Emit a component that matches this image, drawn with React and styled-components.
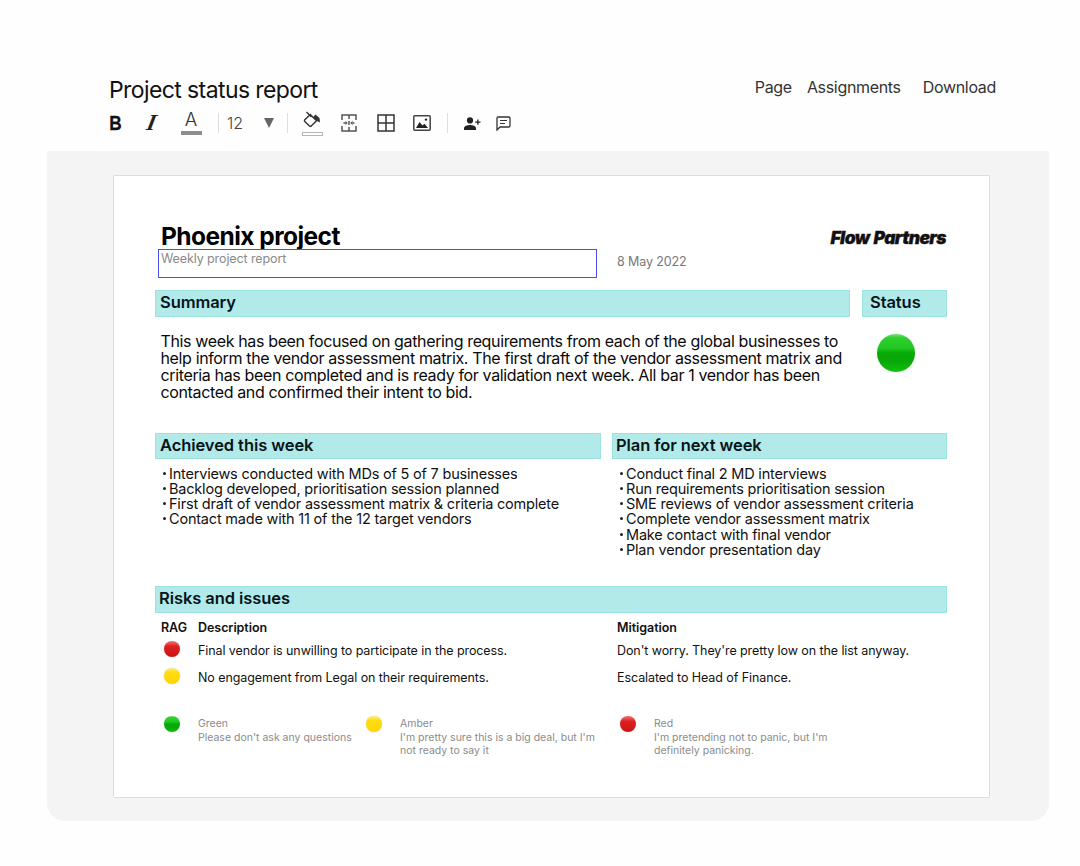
import React from "react";
import styled, { createGlobalStyle } from "styled-components";

const GlobalStyle = createGlobalStyle`
  * { box-sizing: border-box; }
  html, body { margin: 0; padding: 0; background: #fff; }
  body { font-family: Inter, "Liberation Sans", sans-serif; color: #000; }
`;

const Screen = styled.div`
  width: 1080px;
  height: 866px;
  padding-top: 74px;
  overflow: hidden;
  background: #fefefe;
`;

const TopBar = styled.header`
  display: flex;
  justify-content: space-between;
  align-items: flex-start;
  height: 77px;
  padding: 0 84px 0 109px;
`;

const TitleBlock = styled.div`
  display: flex;
  flex-direction: column;
`;

const DocTitle = styled.h1`
  margin: 0;
  font-size: 23px;
  line-height: 32px;
  font-weight: 400;
  letter-spacing: -0.6px;
  color: #111;
`;

const Toolbar = styled.div`
  display: flex;
  align-items: center;
  height: 32px;
  margin-top: 1px;
  color: #333;
`;

const ToolSlot = styled.div`
  width: ${({ $w }) => $w}px;
  height: 32px;
  display: flex;
  flex-direction: column;
  align-items: center;
  justify-content: center;
  flex: none;
`;

const Divider = styled.div`
  width: 1px;
  height: 20px;
  background: #dedede;
  flex: none;
`;

const BoldGlyph = styled.span`
  font-family: "Liberation Sans", sans-serif;
  font-size: 21px;
  line-height: 22px;
  font-weight: 700;
  color: #111;
  transform: scaleX(0.82);
  -webkit-text-stroke: 0.3px #111;
`;

const ItalicGlyph = styled.span`
  font-family: "Liberation Serif", serif;
  font-size: 23px;
  line-height: 22px;
  font-weight: 700;
  font-style: italic;
  color: #222;
  transform: skewX(-12deg);
`;

const FontLetter = styled.span`
  font-size: 18.5px;
  line-height: 16px;
  font-weight: 300;
  color: #333;
`;

const ColorBar = styled.span`
  width: 21px;
  height: 4px;
  margin-top: 4px;
  background: ${({ $empty }) => ($empty ? "#fff" : "#8e8e8e")};
  border: ${({ $empty }) => ($empty ? "1px solid #b5b5b5" : "none")};
`;

const SizeValue = styled.span`
  font-size: 16px;
  font-weight: 300;
  color: #444;
`;

const Caret = styled.span`
  width: 0;
  height: 0;
  border-left: 5px solid transparent;
  border-right: 5px solid transparent;
  border-top: 10px solid #666;
`;

const NavLinks = styled.nav`
  display: flex;
  padding-top: 2px;
  font-size: 16px;
  line-height: 22px;
  letter-spacing: -0.32px;
  color: #333;
`;

const NavLink = styled.a`
  margin-left: ${({ $gap }) => $gap}px;
`;

const Panel = styled.main`
  width: 1002px;
  height: 670px;
  margin-left: 47px;
  padding: 25px 60px 0 67px;
  background: #f4f4f4;
  border-radius: 0 0 18px 18px;
`;

const Sheet = styled.section`
  width: 875px;
  height: 621px;
  padding: 46px 42px 0 41px;
  background: #fff;
  box-shadow: 0 0 1px rgba(0, 0, 0, 0.55);
`;

const SheetHead = styled.div`
  display: flex;
  justify-content: space-between;
  height: 68px;
`;

const HeadLeft = styled.div`
  display: flex;
  flex-direction: column;
  padding-left: 3px;
`;

const ProjectName = styled.h2`
  margin: 0 0 0 3px;
  padding-top: 1px;
  font-size: 24.5px;
  line-height: 26px;
  font-weight: 700;
  letter-spacing: -0.55px;
`;

const SubRow = styled.div`
  display: flex;
  align-items: center;
`;

const SubtitleBox = styled.div`
  width: 439px;
  height: 29px;
  padding: 1px 2px;
  border: 1.5px solid #4a50e8;
  font-size: 12.5px;
  line-height: 15px;
  letter-spacing: -0.1px;
  color: #8a8a8a;
`;

const DateText = styled.span`
  margin: 0 0 5px 20px;
  font-size: 12.5px;
  letter-spacing: -0.12px;
  color: #777;
`;

const Logo = styled.div`
  margin: 6px 1px 0 0;
  font-size: 17.5px;
  line-height: 20px;
  font-weight: 900;
  font-style: italic;
  letter-spacing: -0.6px;
  word-spacing: 1px;
  color: #111;
  -webkit-text-stroke: 0.3px #111;
`;

const Row = styled.div`
  display: flex;
  justify-content: space-between;
`;

const SectionBar = styled.div`
  width: ${({ $w }) => ($w ? `${$w}px` : "100%")};
  height: ${({ $h }) => $h || 27}px;
  padding-left: ${({ $pad }) => $pad || 4}px;
  background: #b2eae9;
  border: 1px solid #9be3e1;
  font-size: 16.5px;
  line-height: ${({ $h }) => ($h || 27) - 4}px;
  font-weight: 600;
  letter-spacing: -0.08px;
  color: #07141a;
  flex: none;
`;

const SummaryBody = styled.div`
  display: flex;
  justify-content: space-between;
  height: 116px;
`;

const SummaryText = styled.p`
  width: 690px;
  margin: 16px 0 0 5.5px;
  font-size: 16px;
  line-height: 17px;
  letter-spacing: -0.36px;
  color: #0a0a0a;
`;

const Dot = styled.span`
  display: block;
  width: ${({ $size }) => $size}px;
  height: ${({ $size }) => $size}px;
  border-radius: 50%;
  flex: none;
  background: ${({ $tone }) =>
    ({
      green: "linear-gradient(#7fe07f 0%, #2ed02e 10%, #22c822 36%, #0aa80a 50%, #08a808 72%, #10c010 100%)",
      amber: "linear-gradient(#ffec80 0%, #ffdc10 28%, #ffd600 100%)",
      red: "linear-gradient(#f47070 0%, #dc2020 34%, #cc1414 100%)",
    })[$tone]};
  box-shadow: 0 0 1px rgba(0, 0, 0, 0.35);
`;

const StatusCell = styled.div`
  width: 85px;
  padding: 17px 0 0 15px;
`;

const Columns = styled.div`
  display: flex;
  justify-content: space-between;
  height: 153px;
`;

const Column = styled.div`
  width: ${({ $w }) => $w}px;
`;

const BulletList = styled.ul`
  margin: 7px 0 0;
  padding: 0 0 0 6px;
  list-style: none;
  font-size: 14.5px;
  line-height: 15.15px;
  letter-spacing: -0.2px;
  color: #111;
`;

const BulletItem = styled.li`
  display: flex;
  &::before {
    content: "";
    width: 3px;
    height: 3px;
    margin: 6px 3px 0 2px;
    border-radius: 50%;
    background: #222;
    flex: none;
  }
`;

const RiskGrid = styled.div`
  display: grid;
  grid-template-columns: 37px 419px 1fr;
  padding: 7px 0 0 6px;
  font-size: 12.5px;
  color: #111;
`;

const RiskHead = styled.div`
  height: 15px;
  line-height: 15px;
  font-weight: 600;
  letter-spacing: -0.05px;
  margin-bottom: 8px;
`;

const RiskCell = styled.div`
  height: 27px;
  line-height: 15px;
  letter-spacing: -0.08px;
`;

const DotCell = styled.div`
  height: 27px;
  padding-left: 3px;
  margin-top: -2px;
`;

const Legend = styled.div`
  display: flex;
  margin-top: 19px;
  padding-left: 9px;
`;

const LegendItem = styled.div`
  width: ${({ $w }) => $w}px;
  display: flex;
  flex: none;
`;

const LegendText = styled.div`
  width: ${({ $w }) => $w}px;
  margin: 1px 0 0 18px;
  font-size: 10.5px;
  line-height: 13.5px;
  color: #8b8b8b;
`;

const BucketIcon = () => (
  <svg width="18" height="17" viewBox="0 0 18 17" fill="none">
    <path d="M1.800 8.800L7.300 3.500l6.200 6.200-5.300 5.300a1.200 1.200 0 0 1-1.700 0L1.800 10.500a1.200 1.200 0 0 1 0-1.700z" stroke="#333" strokeWidth="1.400" />
    <path d="M3.500 1L8.500 6" stroke="#333" strokeWidth="1.400" />
    <path d="M10 6.200L12.500 3.500l4 3.500.5 4.500-3.500-1.800z" fill="#333" />
  </svg>
);

const SplitIcon = () => (
  <svg width="16" height="18" viewBox="0 0 16 18" fill="none" stroke="#555" strokeWidth="1.500">
    <path d="M1 6V1h14v5M1 12v5h14v-5" />
    <path d="M8 1v4M8 7v4M8 13v4" />
    <path d="M2.500 9H6M13.500 9H10" />
    <path d="M4.500 7.400L6.200 9l-1.700 1.600M11.500 7.400L9.800 9l1.700 1.600" strokeWidth="1" />
  </svg>
);

const GridIcon = () => (
  <svg width="18" height="18" viewBox="0 0 18 18" fill="none" stroke="#333" strokeWidth="1.500">
    <rect x="1" y="1" width="16" height="16" />
    <path d="M9 1v16M1 9h16" />
  </svg>
);

const ImageIcon = () => (
  <svg width="18" height="16" viewBox="0 0 18 16">
    <rect x="0.800" y="0.800" width="16.400" height="14.400" rx="1" fill="#fff" stroke="#444" strokeWidth="1.500" />
    <path d="M3 13l3.500-6 3 3.600 2-1.800L15 13z" fill="#222" />
    <circle cx="13" cy="4.600" r="1.200" fill="#222" />
  </svg>
);

const PersonAddIcon = () => (
  <svg width="17" height="13" viewBox="0 0 17 13" fill="#222">
    <circle cx="6" cy="3.400" r="3.100" />
    <path d="M0 13v-1.800C0 9 3.400 7.900 6 7.900s6 1.100 6 3.300V13z" />
    <path d="M13.200 2.500h1.300v2h2v1.300h-2v2h-1.300v-2h-2V4.500h2z" />
  </svg>
);

const CommentIcon = () => (
  <svg width="15" height="15" viewBox="0 0 15 15" fill="none" stroke="#333">
    <path d="M1 2.200a1.200 1.200 0 0 1 1.200-1.200h10.600a1.200 1.200 0 0 1 1.200 1.200v7.600a1.200 1.200 0 0 1-1.200 1.200H4L1 14z" strokeWidth="1.300" />
    <path d="M4 4.500h7M4 7.500h5" strokeWidth="1.200" />
  </svg>
);

const ACHIEVED = [
  "Interviews conducted with MDs of 5 of 7 businesses",
  "Backlog developed, prioritisation session planned",
  "First draft of vendor assessment matrix & criteria complete",
  "Contact made with 11 of the 12 target vendors",
];

const PLANNED = [
  "Conduct final 2 MD interviews",
  "Run requirements prioritisation session",
  "SME reviews of vendor assessment criteria",
  "Complete vendor assessment matrix",
  "Make contact with final vendor",
  "Plan vendor presentation day",
];

export default function App() {
  return (
    <Screen>
      <GlobalStyle />
      <TopBar>
        <TitleBlock>
          <DocTitle>Project status report</DocTitle>
          <Toolbar>
            <ToolSlot $w={14}>
              <BoldGlyph>B</BoldGlyph>
            </ToolSlot>
            <ToolSlot $w={56}>
              <ItalicGlyph>I</ItalicGlyph>
            </ToolSlot>
            <ToolSlot $w={24}>
              <FontLetter>A</FontLetter>
              <ColorBar />
            </ToolSlot>
            <ToolSlot $w={15} />
            <Divider />
            <ToolSlot $w={32}>
              <SizeValue>12</SizeValue>
            </ToolSlot>
            <ToolSlot $w={36}>
              <Caret />
            </ToolSlot>
            <Divider />
            <ToolSlot $w={48}>
              <BucketIcon />
              <ColorBar $empty />
            </ToolSlot>
            <ToolSlot $w={26}>
              <SplitIcon />
            </ToolSlot>
            <ToolSlot $w={48}>
              <GridIcon />
            </ToolSlot>
            <ToolSlot $w={24}>
              <ImageIcon />
            </ToolSlot>
            <ToolSlot $w={13} />
            <Divider />
            <ToolSlot $w={48}>
              <PersonAddIcon />
            </ToolSlot>
            <ToolSlot $w={14}>
              <CommentIcon />
            </ToolSlot>
          </Toolbar>
        </TitleBlock>
        <NavLinks>
          <NavLink>Page</NavLink>
          <NavLink $gap={15}>Assignments</NavLink>
          <NavLink $gap={22}>Download</NavLink>
        </NavLinks>
      </TopBar>

      <Panel>
        <Sheet>
          <SheetHead>
            <HeadLeft>
              <ProjectName>Phoenix project</ProjectName>
              <SubRow>
                <SubtitleBox>Weekly project report</SubtitleBox>
                <DateText>8 May 2022</DateText>
              </SubRow>
            </HeadLeft>
            <Logo>Flow Partners</Logo>
          </SheetHead>

          <Row>
            <SectionBar $w={695}>Summary</SectionBar>
            <SectionBar $w={85} $pad={7}>Status</SectionBar>
          </Row>
          <SummaryBody>
            <SummaryText>
              This week has been focused on gathering requirements from each of the global businesses to
              help inform the vendor assessment matrix. The first draft of the vendor assessment matrix and
              criteria has been completed and is ready for validation next week. All bar 1 vendor has been
              contacted and confirmed their intent to bid.
            </SummaryText>
            <StatusCell>
              <Dot $size={38} $tone="green" />
            </StatusCell>
          </SummaryBody>

          <Columns>
            <Column $w={446}>
              <SectionBar $h={26}>Achieved this week</SectionBar>
              <BulletList>
                {ACHIEVED.map((item) => (
                  <BulletItem key={item}>{item}</BulletItem>
                ))}
              </BulletList>
            </Column>
            <Column $w={335}>
              <SectionBar $h={26} $pad={3}>Plan for next week</SectionBar>
              <BulletList>
                {PLANNED.map((item) => (
                  <BulletItem key={item}>{item}</BulletItem>
                ))}
              </BulletList>
            </Column>
          </Columns>

          <SectionBar $pad={3}>Risks and issues</SectionBar>
          <RiskGrid>
            <RiskHead>RAG</RiskHead>
            <RiskHead>Description</RiskHead>
            <RiskHead>Mitigation</RiskHead>
            <DotCell>
              <Dot $size={16} $tone="red" />
            </DotCell>
            <RiskCell>Final vendor is unwilling to participate in the process.</RiskCell>
            <RiskCell>Don't worry. They're pretty low on the list anyway.</RiskCell>
            <DotCell>
              <Dot $size={16} $tone="amber" />
            </DotCell>
            <RiskCell>No engagement from Legal on their requirements.</RiskCell>
            <RiskCell>Escalated to Head of Finance.</RiskCell>
          </RiskGrid>
          <Legend>
            <LegendItem $w={202}>
              <Dot $size={16} $tone="green" />
              <LegendText $w={168}>
                Green
                <br />
                Please don't ask any questions
              </LegendText>
            </LegendItem>
            <LegendItem $w={254}>
              <Dot $size={16} $tone="amber" />
              <LegendText $w={212}>Amber<br />I'm pretty sure this is a big deal, but I'm not ready to say it</LegendText>
            </LegendItem>
            <LegendItem $w={240}>
              <Dot $size={16} $tone="red" />
              <LegendText $w={210}>Red<br />I'm pretending not to panic, but I'm definitely panicking.</LegendText>
            </LegendItem>
          </Legend>
        </Sheet>
      </Panel>
    </Screen>
  );
}
